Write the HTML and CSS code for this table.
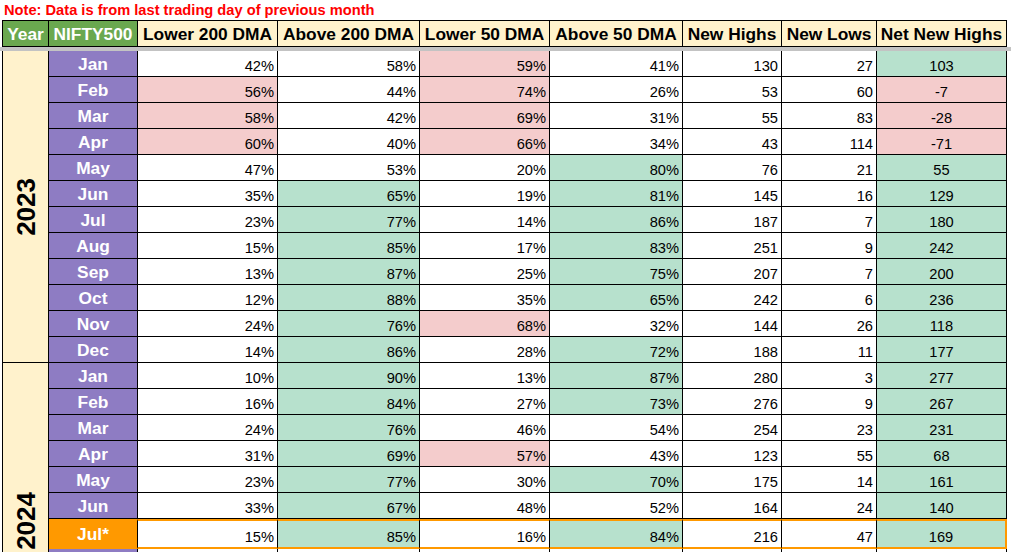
FILE: index.html
```html
<!DOCTYPE html>
<html lang="en">
<head>
<meta charset="utf-8">
<title>NIFTY500 breadth</title>
<link rel="stylesheet" href="styles.css">
</head>
<body>
<div class="note">Note: Data is from last trading day of previous month</div>
<table class="sheet head">
  <colgroup>
    <col class="w-year"><col class="w-idx"><col class="w-l200"><col class="w-a200"><col class="w-l50"><col class="w-a50"><col class="w-nh"><col class="w-nl"><col class="w-nnh">
  </colgroup>
  <tr>
    <th class="green">Year</th>
    <th class="green">NIFTY500</th>
    <th>Lower 200 DMA</th>
    <th>Above 200 DMA</th>
    <th>Lower 50 DMA</th>
    <th>Above 50 DMA</th>
    <th>New Highs</th>
    <th>New Lows</th>
    <th>Net New Highs</th>
  </tr>
</table>
<div class="freeze"></div>
<table class="sheet body">
  <colgroup>
    <col class="w-year"><col class="w-idx"><col class="w-l200"><col class="w-a200"><col class="w-l50"><col class="w-a50"><col class="w-nh"><col class="w-nl"><col class="w-nnh">
  </colgroup>
  <tr><td class="yr" rowspan="12"><span>2023</span></td><td class="mon">Jan</td><td class="num">42%</td><td class="num">58%</td><td class="num r">59%</td><td class="num">41%</td><td class="num">130</td><td class="num">27</td><td class="num ctr g">103</td></tr>
  <tr><td class="mon">Feb</td><td class="num r">56%</td><td class="num">44%</td><td class="num r">74%</td><td class="num">26%</td><td class="num">53</td><td class="num">60</td><td class="num ctr r">-7</td></tr>
  <tr><td class="mon">Mar</td><td class="num r">58%</td><td class="num">42%</td><td class="num r">69%</td><td class="num">31%</td><td class="num">55</td><td class="num">83</td><td class="num ctr r">-28</td></tr>
  <tr><td class="mon">Apr</td><td class="num r">60%</td><td class="num">40%</td><td class="num r">66%</td><td class="num">34%</td><td class="num">43</td><td class="num">114</td><td class="num ctr r">-71</td></tr>
  <tr><td class="mon">May</td><td class="num">47%</td><td class="num">53%</td><td class="num">20%</td><td class="num g">80%</td><td class="num">76</td><td class="num">21</td><td class="num ctr g">55</td></tr>
  <tr><td class="mon">Jun</td><td class="num">35%</td><td class="num g">65%</td><td class="num">19%</td><td class="num g">81%</td><td class="num">145</td><td class="num">16</td><td class="num ctr g">129</td></tr>
  <tr><td class="mon">Jul</td><td class="num">23%</td><td class="num g">77%</td><td class="num">14%</td><td class="num g">86%</td><td class="num">187</td><td class="num">7</td><td class="num ctr g">180</td></tr>
  <tr><td class="mon">Aug</td><td class="num">15%</td><td class="num g">85%</td><td class="num">17%</td><td class="num g">83%</td><td class="num">251</td><td class="num">9</td><td class="num ctr g">242</td></tr>
  <tr><td class="mon">Sep</td><td class="num">13%</td><td class="num g">87%</td><td class="num">25%</td><td class="num g">75%</td><td class="num">207</td><td class="num">7</td><td class="num ctr g">200</td></tr>
  <tr><td class="mon">Oct</td><td class="num">12%</td><td class="num g">88%</td><td class="num">35%</td><td class="num g">65%</td><td class="num">242</td><td class="num">6</td><td class="num ctr g">236</td></tr>
  <tr><td class="mon">Nov</td><td class="num">24%</td><td class="num g">76%</td><td class="num r">68%</td><td class="num">32%</td><td class="num">144</td><td class="num">26</td><td class="num ctr g">118</td></tr>
  <tr><td class="mon">Dec</td><td class="num">14%</td><td class="num g">86%</td><td class="num">28%</td><td class="num g">72%</td><td class="num">188</td><td class="num">11</td><td class="num ctr g">177</td></tr>
  <tr><td class="yr" rowspan="12"><span>2024</span></td><td class="mon">Jan</td><td class="num">10%</td><td class="num g">90%</td><td class="num">13%</td><td class="num g">87%</td><td class="num">280</td><td class="num">3</td><td class="num ctr g">277</td></tr>
  <tr><td class="mon">Feb</td><td class="num">16%</td><td class="num g">84%</td><td class="num">27%</td><td class="num g">73%</td><td class="num">276</td><td class="num">9</td><td class="num ctr g">267</td></tr>
  <tr><td class="mon">Mar</td><td class="num">24%</td><td class="num g">76%</td><td class="num">46%</td><td class="num">54%</td><td class="num">254</td><td class="num">23</td><td class="num ctr g">231</td></tr>
  <tr><td class="mon">Apr</td><td class="num">31%</td><td class="num g">69%</td><td class="num r">57%</td><td class="num">43%</td><td class="num">123</td><td class="num">55</td><td class="num ctr g">68</td></tr>
  <tr><td class="mon">May</td><td class="num">23%</td><td class="num g">77%</td><td class="num">30%</td><td class="num g">70%</td><td class="num">175</td><td class="num">14</td><td class="num ctr g">161</td></tr>
  <tr><td class="mon">Jun</td><td class="num">33%</td><td class="num g">67%</td><td class="num">48%</td><td class="num">52%</td><td class="num">164</td><td class="num">24</td><td class="num ctr g">140</td></tr>
  <tr class="cur"><td class="mon">Jul*</td><td class="num">15%</td><td class="num g">85%</td><td class="num">16%</td><td class="num g">84%</td><td class="num">216</td><td class="num">47</td><td class="num ctr g last">169</td></tr>
  <tr><td class="mon"></td><td class="num"></td><td class="num"></td><td class="num"></td><td class="num"></td><td class="num"></td><td class="num"></td><td class="num ctr"></td></tr>
  <tr><td class="mon"></td><td class="num"></td><td class="num"></td><td class="num"></td><td class="num"></td><td class="num"></td><td class="num"></td><td class="num ctr"></td></tr>
  <tr><td class="mon"></td><td class="num"></td><td class="num"></td><td class="num"></td><td class="num"></td><td class="num"></td><td class="num"></td><td class="num ctr"></td></tr>
  <tr><td class="mon"></td><td class="num"></td><td class="num"></td><td class="num"></td><td class="num"></td><td class="num"></td><td class="num"></td><td class="num ctr"></td></tr>
  <tr><td class="mon"></td><td class="num"></td><td class="num"></td><td class="num"></td><td class="num"></td><td class="num"></td><td class="num"></td><td class="num ctr"></td></tr>
</table>
</body>
</html>
```
FILE: styles.css
```css
* { box-sizing: border-box; }
html, body {
  margin: 0;
  height: 552px;
  overflow: hidden;
  background: #fff;
}
body {
  font-family: "Liberation Sans", Arial, sans-serif;
  color: #000;
}
.note {
  height: 20px;
  line-height: 20px;
  padding-left: 4px;
  color: #ff0000;
  font-weight: bold;
  font-size: 14.67px;
  white-space: nowrap;
}
.sheet {
  border-collapse: separate;
  border-spacing: 0;
  table-layout: fixed;
  width: 1005px;
  margin-left: 2px;
  border-left: 1px solid #000;
}
.w-year { width: 46px; }
.w-idx { width: 89px; }
.w-l200 { width: 140px; }
.w-a200 { width: 142px; }
.w-l50 { width: 130px; }
.w-a50 { width: 133px; }
.w-nh { width: 99px; }
.w-nl { width: 95px; }
.w-nnh { width: 130px; }

.sheet th, .sheet td {
  border-right: 1px solid #000;
  border-bottom: 1px solid #000;
  padding: 0;
  overflow: hidden;
  white-space: nowrap;
}
.head tr { height: 27px; }
.head th {
  border-top: 1px solid #000;
  background: #fff2cc;
  font-size: 17.33px;
  font-weight: bold;
  text-align: center;
  vertical-align: middle;
  line-height: 20px;
}
.head th.green {
  background: #6aa84f;
  color: #fff;
}
.freeze {
  height: 4px;
  background: #c3c3c3;
}
.body tr { height: 26px; }
.body tr.cur { height: 30px; }
td.yr {
  background: #fff2cc;
  text-align: center;
  vertical-align: middle;
  font-weight: bold;
  font-size: 26px;
  line-height: 26px;
}
td.yr span {
  display: inline-block;
  vertical-align: middle;
  writing-mode: vertical-rl;
  transform: rotate(180deg);
}
td.mon {
  background: #8e7cc3;
  color: #fff;
  font-weight: bold;
  font-size: 17.33px;
  text-align: center;
  vertical-align: middle;
  line-height: 20px;
}
td.num {
  font-size: 14.67px;
  text-align: right;
  padding-right: 3px;
  padding-bottom: 1px;
  vertical-align: bottom;
  line-height: 17px;
}
td.ctr {
  text-align: center;
  padding-right: 0;
}
.r { background: #f4cccc; }
.g { background: #b7e1cd; }
tr.cur td {
  border-top: 2px solid #ff9900;
  border-bottom: 2px solid #ff9900;
}
tr.cur td.mon {
  background: #ff9900;
}
tr.cur td.last {
  border-right: 2px solid #ff9900;
}
```
